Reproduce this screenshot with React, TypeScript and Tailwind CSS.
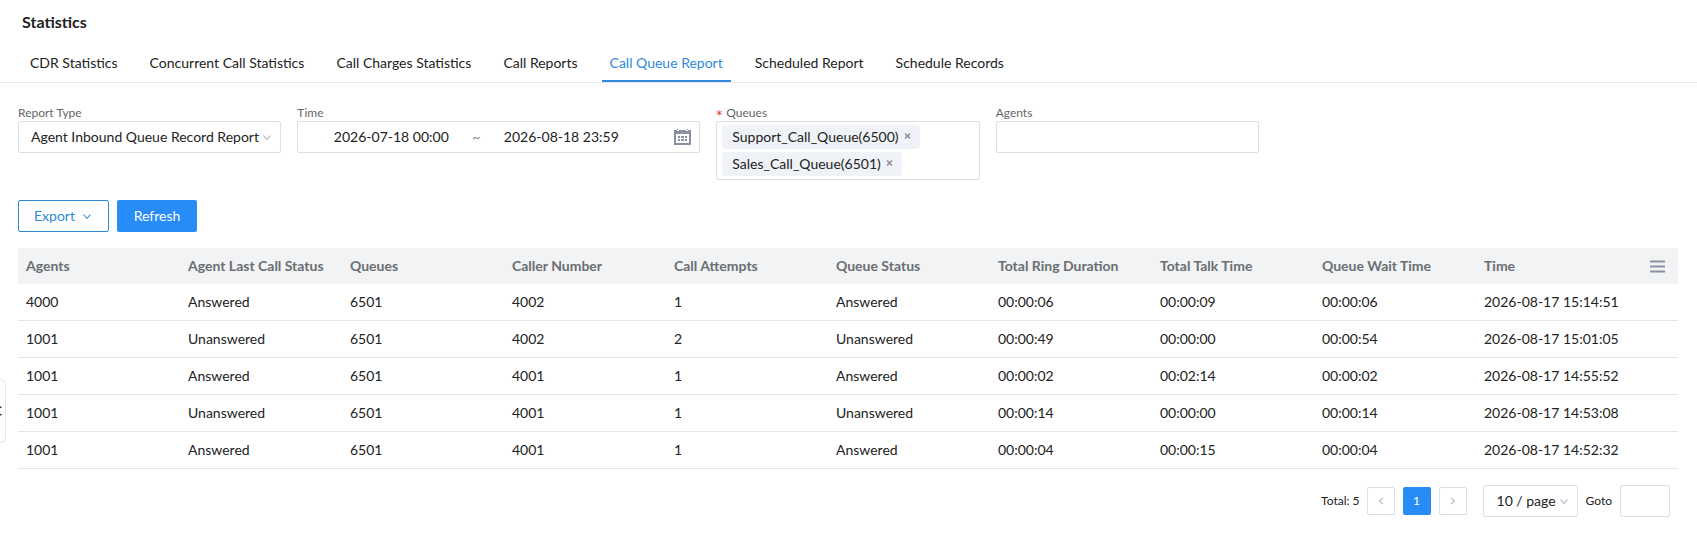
const tabs = [
  "CDR Statistics",
  "Concurrent Call Statistics",
  "Call Charges Statistics",
  "Call Reports",
  "Call Queue Report",
  "Scheduled Report",
  "Schedule Records",
];

const columns = [
  "Agents",
  "Agent Last Call Status",
  "Queues",
  "Caller Number",
  "Call Attempts",
  "Queue Status",
  "Total Ring Duration",
  "Total Talk Time",
  "Queue Wait Time",
  "Time",
];

const rows = [
  ["4000", "Answered", "6501", "4002", "1", "Answered", "00:00:06", "00:00:09", "00:00:06", "2026-08-17 15:14:51"],
  ["1001", "Unanswered", "6501", "4002", "2", "Unanswered", "00:00:49", "00:00:00", "00:00:54", "2026-08-17 15:01:05"],
  ["1001", "Answered", "6501", "4001", "1", "Answered", "00:00:02", "00:02:14", "00:00:02", "2026-08-17 14:55:52"],
  ["1001", "Unanswered", "6501", "4001", "1", "Unanswered", "00:00:14", "00:00:00", "00:00:14", "2026-08-17 14:53:08"],
  ["1001", "Answered", "6501", "4001", "1", "Answered", "00:00:04", "00:00:15", "00:00:04", "2026-08-17 14:52:32"],
];

const queues = ["Support_Call_Queue(6500)", "Sales_Call_Queue(6501)"];

interface IconProps {
  d: string;
  className?: string;
}

const Icon = ({ d, className = "" }: IconProps) => (
  <svg viewBox="0 0 12 12" className={`size-3 shrink-0 ${className}`} fill="none" stroke="currentColor" strokeWidth="1.1">
    <path d={d} />
  </svg>
);

const down = "M2.5 4.5L6 8.5L9.5 4.5";
const left = "M8 3L4.5 6L8 9";
const right = "M4 3L7.5 6L4 9";

const CalendarIcon = () => (
  <svg viewBox="0 0 17 16" className="h-4 w-[17px] shrink-0" shapeRendering="crispEdges">
    <path fill="#8c90a0" fillRule="evenodd" d="M0 1h3v1h2V1h7v1h2V1h3v15H0zM2 5v9h13V5z" />
    <path fill="#8c90a0" d="M3 0h1v1H3zM13 0h1v1h-1zM4 7h2v2H4zM7 7h3v2H7zM11 7h2v2h-2zM4 10h2v2H4zM7 10h3v2H7zM11 10h2v2h-2z" />
  </svg>
);

const Filters = () => (
  <div className="grid grid-cols-12 items-start gap-4">
    <div className="col-span-2">
      <label htmlFor="report-type" className="block h-4 text-xs leading-4 text-[#666]">
        Report Type
      </label>
      <div className="grid items-center">
        <select
          id="report-type"
          className="col-start-1 row-start-1 h-8 w-full appearance-none rounded-xs border border-[#dcdfe3] bg-white pr-5 pl-3"
        >
          <option>Agent Inbound Queue Record Report</option>
        </select>
        <Icon d={down} className="pointer-events-none col-start-1 row-start-1 mr-2 justify-self-end text-[#a8abb2]" />
      </div>
    </div>
    <fieldset className="col-span-3 min-w-0">
      <legend className="block h-4 text-xs leading-4 text-[#666]">Time</legend>
      <div className="flex h-8 items-center rounded-xs border border-[#dcdfe3] pr-2 pl-3">
        <input aria-label="Start time" defaultValue="2026-07-18 00:00" className="w-0 min-w-0 flex-1 text-center" />
        <span className="w-2 text-center text-[#888]">~</span>
        <input aria-label="End time" defaultValue="2026-08-18 23:59" className="mr-8 w-0 min-w-0 flex-1 text-center" />
        <CalendarIcon />
      </div>
    </fieldset>
    <div className="col-span-2">
      <label htmlFor="queues" className="flex h-4 gap-1 text-xs leading-4 text-[#666]">
        <span className="pt-1 font-['DejaVu_Sans',sans-serif] leading-3 text-[#d9401c]">*</span>
        Queues
      </label>
      <div className="flex flex-wrap gap-[3px] rounded-xs border border-[#dcdfe3] py-[3px] pl-[5px]">
        {queues.map((queue) => (
          <span key={queue} className="flex h-6 items-center gap-1 rounded bg-[#eff2f7] pr-2 pl-[10px]">
            {queue}
            <button aria-label={`Remove ${queue}`} className="pb-0.5">
              <svg viewBox="0 0 9 8" className="h-2 w-[9px]" fill="none" stroke="#8a8d93" strokeWidth="1.5">
                <path d="M2 1.5L7 6.5M7 1.5L2 6.5" />
              </svg>
            </button>
          </span>
        ))}
        <input id="queues" className="h-6 w-10 min-w-0" />
      </div>
    </div>
    <div className="col-span-2">
      <label htmlFor="agents" className="block h-4 text-xs leading-4 text-[#666]">
        Agents
      </label>
      <input id="agents" className="block h-8 w-full rounded-xs border border-[#dcdfe3] px-3" />
    </div>
  </div>
);

const ReportTable = () => (
  <table className="mt-4 w-full table-fixed border-separate border-spacing-0 text-left">
    <colgroup>
      {columns.map((column) => (
        <col key={column} />
      ))}
      <col className="w-10" />
    </colgroup>
    <thead>
      <tr className="h-9 bg-[#f1f3f4] text-[#6b6e73]">
        {columns.map((column) => (
          <th key={column} className="px-2 font-bold whitespace-nowrap">
            {column}
          </th>
        ))}
        <th>
          <button aria-label="Columns" className="ml-3 block">
            <svg viewBox="0 0 15 13" className="h-[13px] w-[15px]" stroke="#8e91a3" strokeWidth="2">
              <path d="M0 1.5H15M0 6.5H15M0 11.5H15" />
            </svg>
          </button>
        </th>
      </tr>
    </thead>
    <tbody>
      {rows.map((row) => (
        <tr key={row[9]} className="h-[37px]">
          {row.map((cell, index) => (
            <td key={index} className="border-b border-[#e2e6ea] px-2 whitespace-nowrap">
              {cell}
            </td>
          ))}
          <td className="border-b border-[#e2e6ea]" />
        </tr>
      ))}
    </tbody>
  </table>
);

const Pagination = () => (
  <div className="mt-4 flex items-center justify-end pr-2">
    <span className="mr-[7px] text-xs">Total: 5</span>
    <div className="mr-4 flex gap-2">
      <button aria-label="Previous page" className="grid size-7 place-items-center rounded-xs border border-[#dcdfe3]">
        <Icon d={left} className="text-[#b8bbc2]" />
      </button>
      <button className="size-7 rounded-xs bg-[#278cf6] text-xs text-white">1</button>
      <button aria-label="Next page" className="grid size-7 place-items-center rounded-xs border border-[#dcdfe3]">
        <Icon d={right} className="text-[#b8bbc2]" />
      </button>
    </div>
    <div className="mr-2 grid items-center">
      <select
        aria-label="Page size"
        className="col-start-1 row-start-1 h-8 w-[95px] appearance-none rounded-xs border border-[#dcdfe3] bg-white pl-[13px]"
      >
        <option>10 / page</option>
      </select>
      <Icon d={down} className="pointer-events-none col-start-1 row-start-1 mr-2 justify-self-end text-[#a8abb2]" />
    </div>
    <label htmlFor="goto" className="mr-2 text-xs">
      Goto
    </label>
    <input id="goto" className="h-8 w-[50px] rounded-xs border border-[#dcdfe3] px-2" />
  </div>
);

export default function App() {
  return (
    <div className="relative bg-white font-[Lato,sans-serif] text-sm text-[#222]">
      <h1 className="px-[22px] pt-3 text-base leading-5 font-bold">Statistics</h1>
      <nav className="mt-3 flex gap-4 border-b border-[#e4e6e9] px-[22px]">
        {tabs.map((tab) => (
          <a
            key={tab}
            href="#"
            className={
              tab === "Call Queue Report"
                ? "h-[38px] border-b-2 border-[#3089dc] px-2 leading-[38px] text-[#3089dc]"
                : "h-[38px] px-2 leading-[38px]"
            }
          >
            {tab}
          </a>
        ))}
      </nav>
      <main className="pt-[22px] pr-[19px] pb-4 pl-[18px]">
        <Filters />
        <div className="mt-5 flex gap-2">
          <button className="flex h-8 items-center gap-[6px] rounded-xs border border-[#3089dc] px-[15px] text-[#3089dc]">
            Export
            <Icon d={down} />
          </button>
          <button className="h-8 w-20 rounded-xs bg-[#278cf6] text-white">Refresh</button>
        </div>
        <ReportTable />
        <Pagination />
      </main>
      <button
        aria-label="Collapse menu"
        className="absolute top-[379px] left-0 flex h-16 w-[6px] items-center overflow-hidden rounded-r-md border border-l-0 border-[#e4e6e9]"
      >
        <svg viewBox="0 0 2 10" className="h-[10px] w-0.5" fill="none" stroke="#1f3347" strokeWidth="1.5">
          <path d="M-3 2.5L1.5 1M-3 7.5L1.5 9" />
        </svg>
      </button>
    </div>
  );
}
